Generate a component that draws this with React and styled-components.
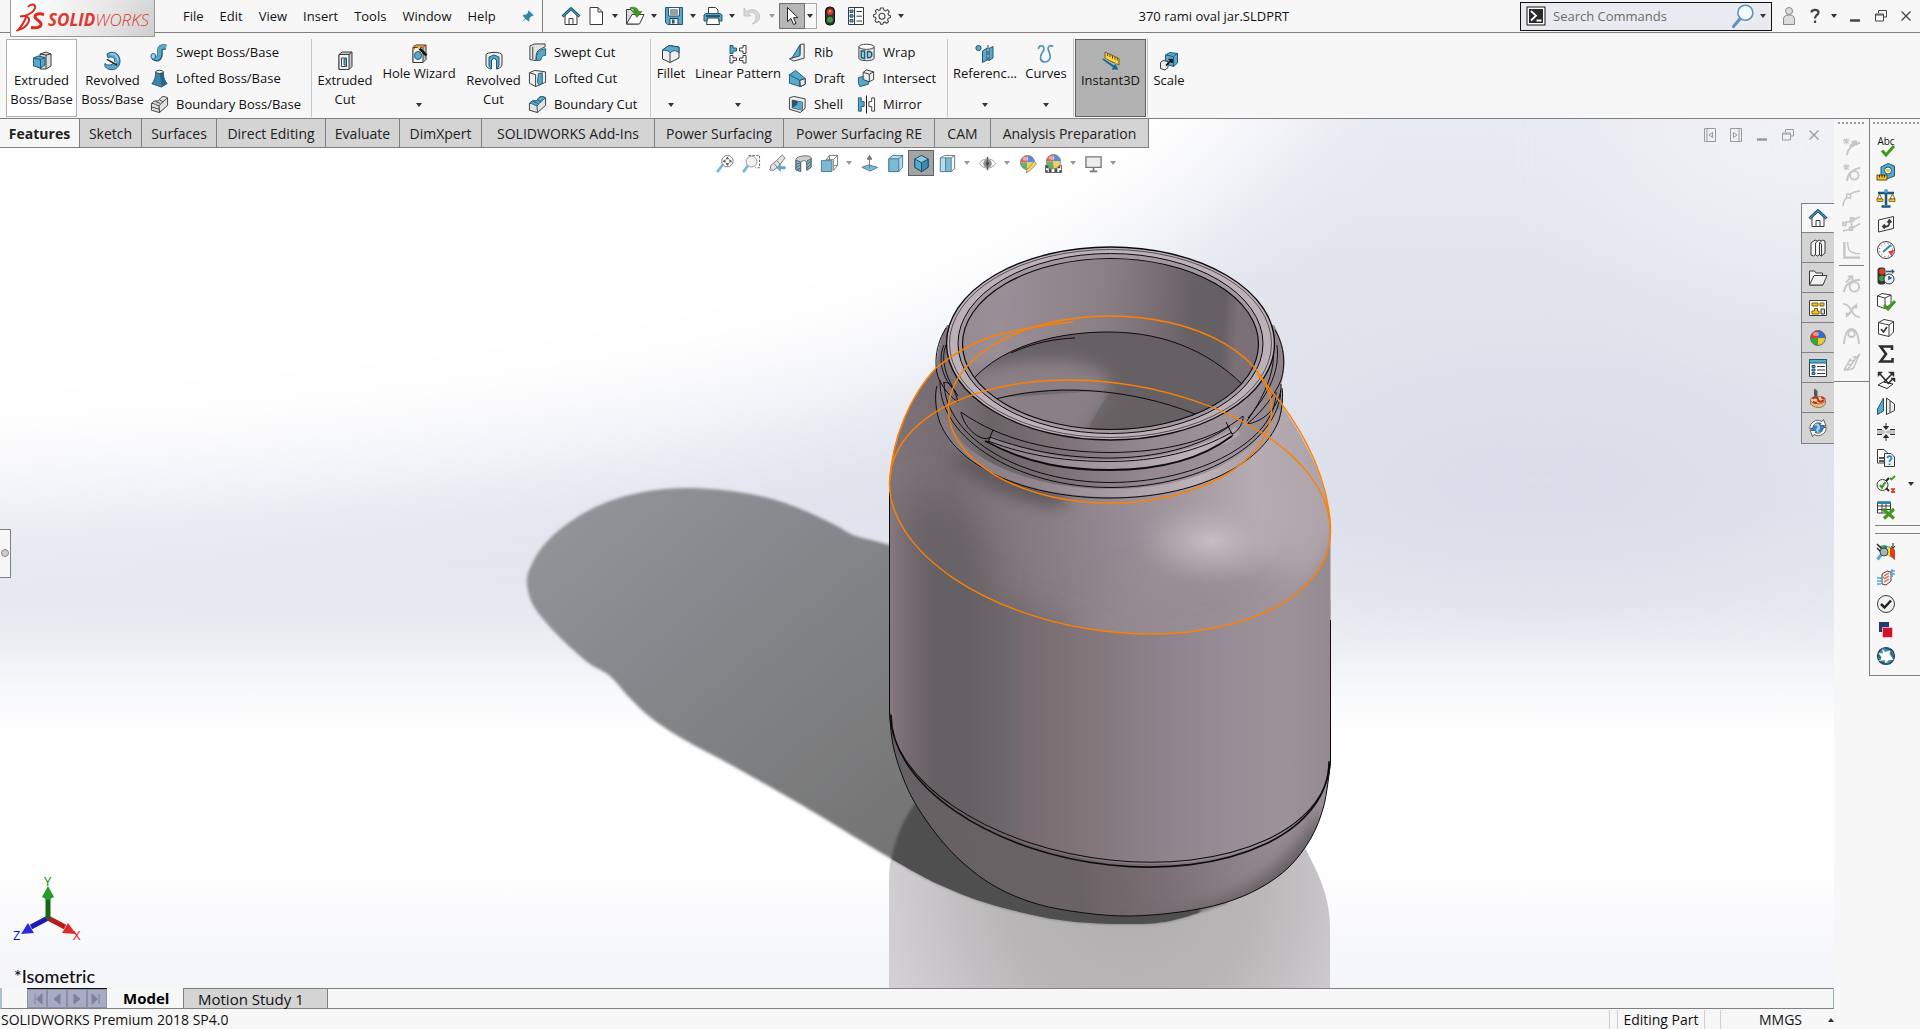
import React from "react";
import styled, { createGlobalStyle, css } from "styled-components";

const sans = `"Open Sans", "Noto Sans", sans-serif`;
const line = "#808080";
const face = "#f7f7f7";
const B = "#5aa9cb";
const L = "#a5d3e6";
const D = "#1d5a7a";
const K = "#3a3a3a";
const W = "#f4f4f4";
const G = "#c4c4c4";

const GlobalStyle = createGlobalStyle`
  * { box-sizing: border-box; }
  html, body, #root { height: 100%; }
  body { margin: 0; overflow: hidden; font-family: ${sans}; font-size: 13px; color: #111; background: ${face}; }
  button { font: inherit; color: inherit; background: none; border: 0; padding: 0; margin: 0; }
  svg { display: block; flex: none; }
`;

/* ---------- icons (20 x 20 grid) ---------- */
const house = (
  <g strokeLinejoin="round">
    <path d="M4 9V18.5H16V9L10 4Z" fill="#fff" stroke={K} />
    <path d="M8 18.5V12.5H12V18.5" fill="none" stroke={K} />
    <path d="M1.5 10.5L10 2.5L18.5 10.5" fill="none" stroke={D} strokeWidth="3" />
    <path d="M2 10L10 2.8L18 10" fill="none" stroke={B} strokeWidth="1" />
  </g>
);
const cube = (f1, f2, f3, s) => (
  <g stroke={s} strokeLinejoin="round">
    <path d="M10 1.5L17 5.2V14L10 18.5L3 14V5.2Z" fill={f1} />
    <path d="M3 5.2L10 9.2V18.5L3 14Z" fill={f2} />
    <path d="M17 5.2L10 9.2V18.5L17 14Z" fill={f3} />
  </g>
);
const beach = (
  <g>
    <path d="M10 9V1.5A7.5 7.5 0 0 0 2.5 9Z" fill="#e2392f" />
    <path d="M10 9V1.5A7.5 7.5 0 0 1 17.5 9Z" fill="#2f6fd0" />
    <path d="M10 9V16.5A7.5 7.5 0 0 1 2.5 9Z" fill="#3aa53a" />
    <path d="M10 9V16.5A7.5 7.5 0 0 0 17.5 9Z" fill="#f2c832" />
    <circle cx="10" cy="9" r="7.5" fill="none" stroke="#555" strokeWidth=".8" />
    <ellipse cx="8" cy="5" rx="3" ry="2" fill="#fff" opacity=".45" />
  </g>
);
const slab = (
  <g stroke={K} strokeLinejoin="round">
    <path d="M4 3.5L7 1H17V15.5L14 18.5H4Z" fill={G} />
    <path d="M4 3.5H14V18.5H4Z" fill={W} />
    <path d="M14 3.5L17 1" />
  </g>
);
const pale = "#c6c6c6";

const glyphs = {
  home: house,
  doc: <path d="M4 1.5H12L16.5 6V18.5H4Z M12 1.5V6H16.5" fill="#fff" stroke={K} strokeLinejoin="round" />,
  open: (
    <g strokeLinejoin="round">
      <path d="M1.5 18V3.5H6L7 5H13V18Z" fill="#ddd" stroke={K} />
      <path d="M1.5 18L7 8.5H19L14.5 18Z" fill="#fff" stroke={K} />
      <path d="M5 1.500C10 .5 13 2 13.500 5.500H17L12 11.500L7.500 5.500H10C9.500 3.500 8 2.500 5 2.500Z" fill="#3f9a1c" stroke="#2b7010" strokeWidth=".5" />
    </g>
  ),
  save: (
    <g>
      <path d="M1.500 1.500H18.500V18.500H3.500L1.500 16.500Z" fill={B} stroke={D} />
      <path d="M4.500 1.500H15.500V10H4.500Z" fill="#fff" stroke={D} />
      <path d="M6 4H14M6 6H14M6 8H14" stroke={K} />
      <path d="M6 12.500H14V18.500H6Z" fill="#eee" stroke={K} />
      <path d="M8 13.500H10.500V17.500H8Z" fill={D} />
    </g>
  ),
  print: (
    <g strokeLinejoin="round">
      <path d="M5.500 8V1.500H12.500L15 4V8" fill="#fff" stroke={K} />
      <path d="M1 9L3 7.500H17L19 9V15H1Z" fill={B} stroke={D} />
      <path d="M4.500 12H15.500L16.500 18.500H3.500Z" fill="#fff" stroke={K} />
      <path d="M3 10H17" stroke={D} strokeWidth="2" />
    </g>
  ),
  undo: <path d="M2 2V10H9L6.500 7.500C10 5 14 7 14 11C14 14 12.500 16 10 18C15 17 18 14 17.500 10C17 4.500 10 1.500 4.500 5.500Z" fill="#d8d8d8" stroke="#bdbdbd" strokeWidth=".8" />,
  cursor: <path d="M5.500 1.500V15.500L9 12.500L11.500 18.500L14 17.500L11.500 11.700H16Z" fill="#fff" stroke="#222" />,
  traffic: (
    <g>
      <rect x="5.500" y="1" width="9" height="18" rx="4" fill="#333" stroke="#111" />
      <circle cx="10" cy="6" r="3" fill="#e23a25" />
      <circle cx="10" cy="13.700" r="3" fill="#3f9a3c" />
      <circle cx="10" cy="5.300" r="1" fill="#ffa090" />
    </g>
  ),
  list: (
    <g>
      <path d="M2.500 1.500H17.500V18.500H2.500Z M8.500 1.500V18.500" fill="#fff" stroke={K} />
      <path d="M4 4H7V6.500H4ZM4 8.700H7V11.200H4ZM4 13.500H7V16H4Z" fill={B} stroke={D} />
      <path d="M10.500 5.500H16M10.500 10.200H16M10.500 15H16" stroke={K} />
    </g>
  ),
  gear: (
    <g fill="none" stroke="#444" strokeWidth="1.100" strokeLinejoin="round">
      <path d="M8.500 2H11.500L12 4.200L13.700 4.900L15.600 3.700L17.300 5.800L16 7.700L16.500 9L18.500 9.800V11.500L16.300 12.200L15.600 13.700L16.500 15.700L14.500 17.200L12.700 15.900L11.500 16.300L10.800 18.300H8.700L8.100 16.200L6.500 15.500L4.500 16.500L3 14.600L4.100 12.800L3.600 11.400L1.500 10.700V8.800L3.700 8.100L4.300 6.600L3.300 4.700L5 3.300L6.800 4.400L8 4Z" />
      <circle cx="10" cy="10.200" r="3" />
    </g>
  ),
  pin: <path d="M11 2L18 9L16.500 10.500L15.300 10L12 13.300L12 16.500L10.500 18L6.800 14.200L1.500 18.700L1.500 18.300L6 13.300L2.300 9.700L3.800 8.200H7L10.300 5L9.700 3.500Z" fill="#2f86b3" />,
  terminal: (
    <g>
      <rect x="1" y="1" width="18" height="18" fill="#fff" stroke="#111" />
      <rect x="3" y="3" width="14" height="14" fill="#2a2a2a" />
      <path d="M5 5L10 9.700L5 14.500M10.500 14.500H15.500" fill="none" stroke="#fff" strokeWidth="1.800" />
    </g>
  ),
  lens: (
    <g>
      <path d="M7.500 11.500L2 18" stroke="#5f93b8" strokeWidth="2.500" strokeLinecap="round" />
      <circle cx="11.500" cy="7" r="6" fill="#f4fbff" stroke="#5f93b8" strokeWidth="1.300" />
    </g>
  ),
  person: (
    <g fill="#dcdcdc" stroke="#8a8a8a">
      <circle cx="10" cy="5" r="3.500" />
      <path d="M4.500 18.500V13C4.500 10 7 9 10 9C13 9 15.500 10 15.500 13V18.500Z" />
    </g>
  ),
  help: <path d="M6.500 6.500C6.500 3 13.500 3 13.500 6.500C13.500 9 10 9 10 12.500M10 14.500V17" fill="none" stroke="#444" strokeWidth="2.200" />,
  min: <path d="M5 14.500H15" stroke="currentColor" strokeWidth="2.500" />,
  restore: <path d="M7.500 7V4.500H15.500V11H12.500M4.500 8H12.500V15H4.500Z M4.500 9H12.500" fill="none" stroke="currentColor" />,
  close: <path d="M5.500 5.500L14.500 14.500M14.500 5.500L5.500 14.500" stroke="currentColor" strokeWidth="1.300" />,
  winLeft: <path d="M4.500 3.500H15.500V16.500H4.500Z M7 4V16 M12.500 7.500V12.500L9 10Z" fill="none" stroke="currentColor" />,
  winRight: <path d="M4.500 3.500H15.500V16.500H4.500Z M13 4V16 M7.500 7.500V12.500L11 10Z" fill="none" stroke="currentColor" />,

  extrude: (
    <g strokeLinejoin="round">
      <path d="M8 3L14 1L19 3V15L14 18H8Z" fill="#ddd" stroke={K} />
      <path d="M14 4V18M14 4L19 3M14 4L8 3" stroke={K} fill="none" />
      <path d="M1.500 7L6 5L13 6.500V14L8.500 17L1.500 15Z" fill={B} stroke={D} />
      <path d="M1.500 7L8.500 8.500V17M8.500 8.500L13 6.500" stroke={D} fill="none" />
    </g>
  ),
  revolve: (
    <g>
      <path d="M4 3C9-1 17 2 17 10C17 16 12 19.500 7 18.500C3 18 1 15 2 12.500C5 15.500 11 14 11.500 10C12 6 8 5 5 7Z" fill={B} stroke={D} />
      <path d="M7 3C11 2 15 5 15 10" fill="none" stroke={L} strokeWidth="1.500" />
      <path d="M4 8L14 14" stroke="#222" strokeWidth="2" />
      <path d="M4 7L13 12" stroke="#fff" />
    </g>
  ),
  sweep: (
    <g>
      <path d="M3.500 15C9 19 11 14 10.500 10C10 5 12 3.500 17 4.500" fill="none" stroke={D} strokeWidth="6" />
      <path d="M3.500 14.500C9 18.500 10.500 14 10 10C9.500 5 12 3 17 4" fill="none" stroke={B} strokeWidth="4" />
      <ellipse cx="3.500" cy="14" rx="2.500" ry="3" fill={L} stroke={D} />
    </g>
  ),
  loft: (
    <g strokeLinejoin="round">
      <path d="M6 3H14C14 8 15 12 18 15.500L12 19L2 15.500C5 12 6 8 6 3Z" fill="#3f85a8" stroke={D} />
      <path d="M10 4L12 18L18 15.500C15 12 14 8 14 3Z" fill="#2a6384" />
      <ellipse cx="10" cy="3" rx="4" ry="1.700" fill="#eee" stroke={K} />
    </g>
  ),
  boundary: (
    <g strokeLinejoin="round" stroke={K}>
      <path d="M1.500 9C5 4 8 8 10 5C12 1 15 1 18.500 3V11L10 18.500L1.500 16Z" fill="#e2e2e2" />
      <path d="M1.500 9C4 8 7 11 9.500 11.500C12 8 15 6 18.500 3M9.500 11.500L10 18.500M6 7L11 9M10 5L14 7.500M1.500 12.500L10 15" fill="none" />
    </g>
  ),
  boundaryCut: (
    <g strokeLinejoin="round" stroke={K}>
      <path d="M1.500 9C5 4 8 8 10 5C12 1 15 1 18.500 3V11L10 18.500L1.500 16Z" fill="#e2e2e2" />
      <path d="M1.500 9C5 4 8 8 10 5C12 1 15 1 18.500 3C15 6 12 8 9.500 11.500C7 11 4 8 1.500 9Z" fill={B} stroke={D} />
      <path d="M6 7L11 9M10 5L14 7.500M9.500 11.500L10 18.500" stroke={D} fill="none" />
    </g>
  ),
  extrudeCut: (
    <g>
      {slab}
      <path d="M6.500 7H11.500V15.500H6.500Z" fill="#fff" stroke={K} />
      <path d="M9 8H11.500V14H9Z" fill={B} stroke={D} />
    </g>
  ),
  hole: (
    <g>
      {slab}
      <ellipse cx="9" cy="11.500" rx="3.500" ry="4" fill={B} stroke={D} />
      <path d="M10.500 4.500L17.500 11.500" stroke="#111" strokeWidth="2.500" />
      <path d="M5 1L6 3M8 .5L9 3M13 .5L11.500 3M3 5L6 4.500M16 2L13 4" stroke="#e0711c" strokeWidth="1.500" />
      <circle cx="10" cy="3.500" r="1.500" fill="#f5c518" />
    </g>
  ),
  revolveCut: (
    <g strokeLinejoin="round">
      <path d="M2 4C2 .5 18 .5 18 4V14C18 16 14 18 12.500 18V9L10 6L7.500 9V18C5 18 2 16 2 14Z" fill="#eee" stroke={K} />
      <path d="M5 6L10 4L15 6V15L12.500 18V9L10 7L7.500 9V18L5 15Z" fill={B} stroke={D} />
    </g>
  ),
  sweepCut: (
    <g strokeLinejoin="round">
      <path d="M2 3L7 1H18V4L14 6C10 7 8 11 8.500 18.500L2 17.500Z" fill="#e4e4e4" stroke={K} />
      <path d="M9 18.500C8 11 11 7 18.500 6V13C15 13 13.500 15 13.500 18Z" fill={B} stroke={D} />
      <path d="M5 4V17" stroke={K} />
    </g>
  ),
  loftCut: (
    <g strokeLinejoin="round">
      <path d="M1.500 4L7 1.500L18.500 3V14L8 18.500L1.500 15Z" fill="#eee" stroke={K} />
      <path d="M1.500 4L8 6V18.500" fill="none" stroke={K} />
      <path d="M11 5L15 4V15L12 17L10 14Z" fill={B} stroke={D} />
    </g>
  ),
  fillet: (
    <g strokeLinejoin="round">
      <path d="M1.500 6L8 1.500L18 3V14L9 18.500L1.500 15Z" fill="#eee" stroke={K} />
      <path d="M8 1.500L18 3V9C15 6 12 6 9 9C9 7 6 6.500 1.500 6Z" fill={B} stroke={D} />
      <path d="M9 9V18.500" stroke={K} />
    </g>
  ),
  pattern: (
    <g stroke={K} fill="#fff">
      <path d="M2 1.500H5V4H8.500V7H5V9.500H2Z" fill={B} stroke={D} />
      <path d="M18 1.500H15V4H11.500V7H15V9.500H18Z" />
      <path d="M2 11.500H5V14H8.500V16.500H5V19H2Z" />
      <path d="M18 11.500H15V14H11.500V16.500H15V19H18Z" />
    </g>
  ),
  rib: (
    <g strokeLinejoin="round">
      <path d="M13 1.500L17 1V16L6 19L1.500 16.500L12.500 13Z" fill="#eee" stroke={K} />
      <path d="M12.500 2V13.500L4 16Z" fill={B} stroke={D} />
    </g>
  ),
  draft: (
    <g strokeLinejoin="round">
      <path d="M1.500 6L8 1.500L18 10V16L13 18.500L1.500 15Z" fill={B} stroke={D} />
      <path d="M1.500 6L12.500 12V18.500L18 16V10L12.500 12" fill="#3e86a8" stroke={D} />
      <path d="M12.500 12L18 10V16L13 18.500Z" fill="#eee" stroke={K} />
    </g>
  ),
  shell: (
    <g strokeLinejoin="round">
      <path d="M1.500 3L6 1.500L18 4V14L13 18.500L1.500 15Z" fill="#eee" stroke={K} />
      <path d="M4.500 5.500L15 7.500V16L4.500 13.500Z" fill={D} stroke={K} />
      <path d="M4.500 13.500L10 10V6.500L15 7.500V16Z" fill={B} />
    </g>
  ),
  wrap: (
    <g>
      <path d="M2 4V16C2 19.500 18 19.500 18 16V4" fill="#eee" stroke={K} />
      <ellipse cx="10" cy="4" rx="8" ry="2.700" fill="#fff" stroke={K} />
      <path d="M4.500 8.500H8V16.500L4.500 15.500ZM11 9H13.500L15.500 10.500V13.500L13.500 15.500H11Z" fill={L} stroke={D} strokeWidth="1.600" />
    </g>
  ),
  intersect: (
    <g strokeLinejoin="round">
      <path d="M1.500 9L6 8L12 11V16L3 18.500L1.500 15Z" fill={B} stroke={D} />
      <path d="M6.500 3.500L10 1L17.500 3V11L13 13.500L6.500 11Z" fill="#eee" stroke={K} />
      <path d="M6.500 3.500L13 5.500V13.500M13 5.500L17.500 3" fill="none" stroke={K} />
    </g>
  ),
  mirror: (
    <g>
      <path d="M1.500 3H4.500V7H7.500V12H4.500V17H1.500Z" fill={B} stroke={D} />
      <path d="M18.500 3H15.500V7H12.500V12H15.500V17H18.500Z" fill="#fff" stroke={K} />
      <path d="M10 .5V19.500" stroke="#111" />
    </g>
  ),
  reference: (
    <g>
      <circle cx="3.500" cy="4" r="2.600" fill={B} stroke={D} />
      <path d="M7.500 7L12 4V16L7.500 18.500Z M14 4.500L18 2.500V14L14 16.500Z" fill={B} stroke={D} />
      <path d="M13 1V19.500" stroke={K} strokeDasharray="4 2" />
    </g>
  ),
  curves: <path d="M2.500 5C2.500 1 8 .5 8 4.500C8 8 3.500 10 4.500 14.500C5.500 19 11 19 13.500 15.500C16 11.500 12 7 12 4.500C12 1.500 15 1 17 2.500" fill="none" stroke="#4a90b8" strokeWidth="1.600" />,
  instant: (
    <g>
      <path d="M4 1L18 7.500V14L4 7.500Z" fill="#fbd33c" stroke="#5a4a10" strokeWidth=".8" />
      <path d="M6.500 2.500V5M9 3.500V6M11.500 4.700V7.500M14 6V8.500M16.300 7V9.500" stroke="#222" strokeWidth=".8" />
      <path d="M.5 8.500L2.500 7.300L13 14L14.500 12L18 19H10L11.500 16.500Z" fill="#2a6384" stroke={L} strokeWidth=".6" />
    </g>
  ),
  scale: (
    <g strokeLinejoin="round">
      <path d="M6.500 4L11 1.500L18.500 2.500V12L14.500 15.500L6.500 13Z" fill={B} stroke={D} />
      <path d="M6.500 4L14.500 5.500V15.500M14.500 5.500L18.500 2.500" fill="none" stroke={D} />
      <path d="M1.500 11.500L4 9.500L9 10.500V16.500L6 19L1.500 17.500Z" fill="#eee" stroke={K} />
      <path d="M7 14.500L12.500 9M9.500 8.500H13V12" fill="none" stroke="#111" strokeWidth="1.700" />
    </g>
  ),

  zoomFit: (
    <g>
      <path d="M7 11.500L2 18" stroke={B} strokeWidth="3" strokeLinecap="round" />
      <circle cx="12" cy="7.500" r="6" fill="#fff" stroke="#555" />
      <path d="M12 2.500L14 5.500H10ZM12 12.500L14 9.500H10ZM7 7.500L10 5.500V9.500ZM17 7.500L14 5.500V9.500Z" fill="#333" />
    </g>
  ),
  zoomArea: (
    <g>
      <path d="M7 1.500H18.500V14.500H14" fill="none" stroke="#333" strokeDasharray="2.500 1.500" />
      <path d="M6 12.500L2 18" stroke={B} strokeWidth="3" strokeLinecap="round" />
      <circle cx="10" cy="8" r="5.700" fill="#eee" stroke="#777" />
    </g>
  ),
  previous: (
    <g>
      <path d="M15 1L18 4L11 13L6 17L2 17L3 12L9 7Z" fill="#ddd" stroke="#555" />
      <path d="M6 10L10 14M9 7L13 11" stroke="#555" />
      <path d="M18.500 13H13.500V10L8.500 14.500L13.500 19V16H18.500Z" fill="#3e8fb8" />
    </g>
  ),
  section: (
    <g strokeLinejoin="round">
      <path d="M2 6C2 1.500 18 .5 18 4V14L13.500 17V8C12 6.500 8 7 7 8.500V18.500L2 16.500Z" fill={G} stroke="#444" />
      <path d="M2 6.500L7 8.500V18.500L2 16.500ZM13.500 7.500L18 5V14L13.500 17Z" fill={B} stroke="#333" />
      <path d="M2.500 11L6 9.500M2.500 14L6.500 12M3 16.500L6.500 15M14 11L17.500 7.500M14 14.500L17.500 11" stroke="#333" />
    </g>
  ),
  orient: (
    <g strokeLinejoin="round">
      <path d="M6.500 6L10 1.500H18.500V12L14 17.500M10 1.500V6M14 6L18.500 1.500M14 6H6M14 6V17M14 12H18.500" fill="none" stroke="#555" />
      <path d="M1.500 7H12.500V18.500H1.500Z" fill={B} stroke={D} />
    </g>
  ),
  normal: (
    <g>
      <path d="M2 14L9 11.500L18.500 14L11 18Z" fill={B} stroke={D} />
      <path d="M10 15V3M7.500 5.500L10 1.500L12.500 5.500Z" fill="#555" stroke="#555" />
    </g>
  ),
  viewCube: (
    <g strokeLinejoin="round">
      <path d="M3 5L7 1.500H17.500V14L13.500 18.500H3Z" fill={L} stroke={D} />
      <path d="M3 5H13.500V18.500H3Z" fill={B} stroke={D} />
      <path d="M13.500 5L17.500 1.500" stroke={D} />
    </g>
  ),
  isoCube: cube("#8cc9e2", B, "#3d8db2", "#174d69"),
  display: (
    <g strokeLinejoin="round">
      <path d="M2.500 4L7 1.500H17.500V15.500L14 18.500H2.500Z" fill="#f4f4f4" stroke="#555" />
      <path d="M2.500 4H8V18.500H2.500Z" fill={L} stroke={D} strokeWidth=".8" />
      <path d="M8 4H14V18.500H8Z" fill={B} stroke={D} strokeWidth=".8" />
      <path d="M14 4L17.500 1.500" stroke="#555" />
    </g>
  ),
  eye: (
    <g>
      <path d="M1.500 10C5 3.500 15 3.500 18.500 10C15 16.500 5 16.500 1.500 10Z" fill="#fff" stroke="#888" />
      <circle cx="10" cy="10" r="4.500" fill="#777" />
      <path d="M10 3V17" stroke="#333" strokeWidth="1.500" />
      <circle cx="10" cy="10" r="1.800" fill="#222" />
    </g>
  ),
  appearance: (
    <g>
      {beach}
      <path d="M17.500 8L9.500 16.500L8.500 19.500L11.500 18.500L19.500 10.500Z" fill="#f5d15a" stroke="#6a5420" strokeWidth=".8" />
    </g>
  ),
  sceneBall: (
    <g>
      <path d="M1.500 12H18.500V19.500H1.500Z" fill="#fff" stroke="#333" />
      <path d="M2 12H5V15H2ZM8 15H11V12H8ZM14 12H17V15H14ZM5 15H8V19H5ZM11 15H14V19H11ZM2 17H4V19H2ZM16 17H18V19H16Z" fill="#222" />
      <g transform="translate(0 -1)">{beach}</g>
    </g>
  ),
  monitor: (
    <g>
      <path d="M2 3H18V14H2Z" fill="#e8e8e8" stroke="#555" strokeWidth="1.400" />
      <path d="M10 14V18M6 18.300H14" stroke="#555" strokeWidth="1.800" />
    </g>
  ),

  books: (
    <g fill="#f2f2f2" stroke={K} strokeLinejoin="round">
      <path d="M3 5L7 2L9.500 3V15L5.500 18L3 17Z" />
      <path d="M7.500 5L11 2L13.500 3V15L9.500 18L7.500 17Z" />
      <path d="M11.500 5L14.500 2L17 3V15L13.500 18L11.500 17Z M11.500 5L13.500 6V18" />
    </g>
  ),
  folder: (
    <g fill="#f2f2f2" stroke={K} strokeLinejoin="round">
      <path d="M1.500 17V3H6.500L8 5H14.500V17Z" />
      <path d="M1.500 17L6 7.500H19L15 17Z" />
    </g>
  ),
  palette: (
    <g>
      <path d="M1.500 2.500H18.500V17.500H1.500Z" fill="#fff" stroke={K} />
      <path d="M4 5H10V8H4ZM12 5H16V8H12ZM4 16V13H6.500V10.500H9.500V13H11V16Z" fill="#f6c522" stroke="#7a5f10" />
      <path d="M13 11H16.500V16H13Z" fill="#ddd" stroke={K} />
    </g>
  ),
  ball: <g transform="translate(0 1)">{beach}</g>,
  props: (
    <g>
      <path d="M1.500 1.500H18.500V18.500H1.500Z" fill="#fff" stroke={K} />
      <path d="M1.500 1.500H18.500V5H1.500Z" fill={B} stroke={D} />
      <path d="M4 7.500H7V9.500H4ZM4 11H7V13H4ZM4 14.500H7V16.500H4Z" fill={B} stroke={D} />
      <path d="M9 8.500H17M9 12H17M9 15.500H17" stroke={K} />
    </g>
  ),
  stamp: (
    <g>
      <path d="M2.500 12L10 15L17.500 12V16C15 19 12 20 10 19.500C7 19.500 4 18 2.500 16Z" fill="#e0c080" stroke="#8a6a3a" strokeWidth=".8" />
      <ellipse cx="10" cy="12" rx="7.500" ry="3.800" fill="#ecd6a6" stroke="#8a6a3a" strokeWidth=".8" />
      <path d="M4.500 11C6 8.500 10 9 10 11.500C10 14 14.500 14.500 15.500 12M13 9.500C15 9.500 16 10.500 16 11.500M5 13.500C6 14.500 8 15 9 14.500" fill="none" stroke="#c82f22" strokeWidth="2.200" />
      <path d="M6.500 .5L9.500 3V7L8 11L6 7V3Z" fill="#555" />
    </g>
  ),
  sync: (
    <g>
      <circle cx="10" cy="10" r="7" fill="#2f86d8" />
      <path d="M6 7C9 4 13 9 9 12C8 15 12 15 13 16" fill="none" stroke="#9fd0f5" strokeWidth="2.500" />
      <path d="M2 11C1 5 8 0 14 3.500L15.500 1.500L18 8L11.500 7L13 5.500C9 3.500 5 6 5 10Z" fill="#fff" stroke={K} strokeWidth=".8" />
      <path d="M18 9C19 15 12 20 6 16.500L4.500 18.500L2 12L8.500 13L7 14.500C11 16.500 15 14 15 10Z" fill="#fff" stroke={K} strokeWidth=".8" />
    </g>
  ),

  skTangent: (
    <g fill="none" stroke={pale} strokeWidth="2">
      <path d="M5 19C6 12 10 8 19 6M8 10L15 4M10 5H15V9" />
      <path d="M1 4H8M4.500 1V8M2 2L7 7M7 2L2 7" strokeWidth="1.200" />
    </g>
  ),
  skCircle: (
    <g fill="none" stroke={pale} strokeWidth="2">
      <path d="M5 19C6 11 10 7 19 5" />
      <path d="M1 4H8M4.500 1V8M2 2L7 7M7 2L2 7" strokeWidth="1.200" />
      <circle cx="13" cy="13" r="4.500" />
    </g>
  ),
  skArc: (
    <g fill="none" stroke={pale} strokeWidth="1.600">
      <path d="M1 18C2 9 9 3 19 2" />
      <path d="M5 5.500H9V9.500H5Z" fill={face} />
    </g>
  ),
  skSpline: (
    <g fill="none" stroke={pale} strokeWidth="1.800">
      <path d="M1 9C5 7 8 8 10 6C13 4 15 4 19 2M1 17C5 15 8 16 10 14C13 12 15 12 19 9M10 7V13" />
      <path d="M1 8H4V11H1ZM9 3H12V6H9ZM8 13H11V16H8Z" fill={face} />
    </g>
  ),
  skCorner: (
    <g fill="none" stroke={pale}>
      <path d="M2.500 1V17.500H19" strokeWidth="2.500" />
      <path d="M6 1C6 10 8 13 19 13.500" strokeWidth="1.500" />
    </g>
  ),
  skTan2: (
    <g fill="none" stroke={pale} strokeWidth="2">
      <path d="M2 18C3 10 8 6 19 5M4 8L11 1M6 1.500H11V6" />
      <circle cx="13" cy="12.500" r="5" />
    </g>
  ),
  skInflect: (
    <g stroke={pale} fill="none" strokeWidth="2">
      <path d="M1 3C6 3 8 6 10 10C12 15 15 17 19 17M14 5L6 15" />
      <path d="M10 7L16 2V8ZM10 13L4 18V12Z" fill={pale} stroke="none" />
    </g>
  ),
  skPeak: (
    <g fill="none" stroke={pale} strokeWidth="2">
      <path d="M2 18C3 8 6 2 10 2C14 2 17 8 18 18" />
      <circle cx="10" cy="7" r="3.500" />
    </g>
  ),
  skFit: (
    <g fill="none" stroke={pale} strokeWidth="1.600">
      <path d="M2 18C10 17 10 8 18 2L12 16C9 18 6 18 2 18ZM5 12H10M7 8H14M11 4H17M2 18L9 6" />
    </g>
  ),

  tick: <path d="M6 12.500L10 17L18 8" fill="none" stroke="#3f9a1c" strokeWidth="3" />,
  tape: (
    <g>
      <path d="M5 5L12 1.500L18.500 4V14L12 16.500L5 13Z" fill={B} stroke={D} />
      <circle cx="12" cy="8.500" r="3.500" fill="#e9f3f8" stroke={D} />
      <circle cx="12" cy="8.500" r="1.800" fill="#f6c522" />
      <path d="M1 13H11V18H1Z" fill="#f6c522" stroke="#5a4a10" />
      <path d="M3.500 13V15.500M6 13V15.500M8.500 13V15.500" stroke="#222" />
    </g>
  ),
  balance: (
    <g>
      <path d="M10 2V17M2 5H18M5.500 18.500H14.500" stroke={D} strokeWidth="2.500" />
      <path d="M1 11L3.500 6L6 11ZM14 11L16.500 6L19 11Z" fill="#fff" stroke="#7a5f10" />
      <path d="M1 11H7V13.500H1ZM13 11H19V13.500H13Z" fill="#f6c522" stroke="#7a5f10" strokeWidth=".8" />
      <circle cx="10" cy="3" r="2" fill={B} />
    </g>
  ),
  sheetArrow: (
    <g fill="none" stroke={K}>
      <path d="M2.500 6L17.500 2.500V14.500L2.500 18Z" />
      <path d="M7 12.500H10.500C13 12.500 13.500 10 13.500 7M11.500 8.500L13.500 6L15.500 8.500M9 10.500L7 12.500L9 14.500" strokeWidth="1.800" />
    </g>
  ),
  gauge: (
    <g>
      <circle cx="10" cy="10" r="8.500" fill="#fff" stroke={K} />
      <circle cx="10" cy="10" r="6.500" fill="none" stroke={K} strokeDasharray="1 2.500" />
      <path d="M12 11.500L18 10L15.500 16Z" fill="#e2392f" />
      <path d="M7 12L15 5" stroke="#2f86b3" strokeWidth="2" />
    </g>
  ),
  perf: (
    <g>
      <rect x="1.500" y="1.500" width="8" height="17" rx="3" fill="#333" />
      <circle cx="6" cy="5.500" r="3" fill="#e23a25" />
      <circle cx="6" cy="12.500" r="3" fill="#3f9a3c" />
      <circle cx="13" cy="13" r="5" fill="#e7f2fa" stroke={K} />
      <path d="M13 10V13L15.500 11.500M10 5.500H18.500M16.500 3.500V7.500" fill="none" stroke={D} strokeWidth="1.500" />
    </g>
  ),
  boxTick: (
    <g>
      <path d="M1.500 4L6 1.500L15 3V12L9 16.500L1.500 14Z M1.500 4L9 6V16.500M9 6L15 3" fill="#fff" stroke={K} />
      <path d="M8 13L12 17L19 9" fill="none" stroke="#3f9a1c" strokeWidth="3" />
    </g>
  ),
  boxCheck: (
    <g strokeLinejoin="round">
      <path d="M2.500 4.500L8 1.500L17.500 3.500V14L13 18.500L2.500 16Z" fill="#fff" stroke={K} />
      <path d="M2.500 4.500L13 7V18.500M13 7L17.500 3.500" fill="none" stroke={K} />
      <path d="M5 11L7.500 14L11 9" fill="none" stroke={K} strokeWidth="1.800" />
    </g>
  ),
  sigma: <path d="M16 6V2.500H4.500L10 10L4.500 17.500H16.500V14" fill="none" stroke="#2d2d2d" strokeWidth="2.600" />,
  deviate: (
    <g fill="none" stroke="#2d2d2d">
      <path d="M2 15L7 12L17 14L11 18.500Z" />
      <path d="M4 4L12 13M16 4L8 12M16.500 9L12 14" strokeWidth="1.600" />
      <path d="M2 2H6.500L2 6.500ZM12.500 2H18V6.500ZM15 8H19V12Z" fill="#2d2d2d" strokeWidth=".5" />
    </g>
  ),
  symmetry: (
    <g strokeLinejoin="round">
      <path d="M7.500 2V15L1.500 18.500V13Z" fill={B} stroke={D} />
      <path d="M10.500 2V18.500L18.500 14.500V8Z M14 5V16" fill="#eee" stroke={K} />
    </g>
  ),
  thick: (
    <g stroke="#2d2d2d">
      <path d="M1 7.500H6L10 9.500L14 7.500H19V12.500H14L10 10.500L6 12.500H1Z" fill="#c4c4c4" stroke="none" />
      <path d="M1 7.500H6M14 7.500H19M1 12.500H6M14 12.500H19M10 1V5M10 15V19" />
      <path d="M7.500 4.500L10 7.500L12.500 4.500ZM7.500 15.500L10 12.500L12.500 15.500Z" fill="#2d2d2d" />
    </g>
  ),
  compare: (
    <g>
      <path d="M1.500 1.500H8L11 4.500V15H1.500Z" fill="#fff" stroke={K} />
      <path d="M8.500 5.500H15L18.500 9V18.500H8.500Z" fill="#eef5fa" stroke={K} />
      <path d="M3 10H8M3 13H8" stroke="#222" strokeWidth="1.600" />
      <path d="M11.500 10C11.500 7.500 15.500 7.500 15.500 10C15.500 11.700 13.500 12 13.500 14M13.500 15.500V17" fill="none" stroke="#2f86b3" strokeWidth="1.800" />
    </g>
  ),
  checkGroup: (
    <g fill="none">
      <circle cx="6.500" cy="11" r="5.500" stroke={K} />
      <path d="M4 11L6 13.500L9.500 8" stroke="#3f9a1c" strokeWidth="2.200" />
      <path d="M10 7L13 4M10 14L13 17" stroke="#222" strokeWidth="1.800" />
      <path d="M14 4L15.500 5.500L19 2" stroke="#3f9a1c" strokeWidth="1.800" />
      <path d="M15 14.500L19 18.500M19 14.500L15 18.500M17 14V19" stroke="#d9401c" strokeWidth="1.400" />
    </g>
  ),
  excel: (
    <g>
      <path d="M1.500 2H14.500V13H1.500ZM1.500 6H14.500M1.500 9.500H14.500M6 4V13M10 4V13" fill="#fff" stroke={K} />
      <path d="M1.500 1.500H14.500V4H1.500Z" fill="#2f86b3" />
      <path d="M7 9L18 18.500M18 9L8 18.500" stroke="#3f9a1c" strokeWidth="3.200" />
    </g>
  ),
  simZoom: (
    <g>
      <path d="M3 4L9 3C14 5 16 5 19 8V18C15 14 12 14 9 13Z" fill="#4a4" />
      <path d="M8 4C11 5 12 5 14 6V14L8 13Z" fill="#f3ea2c" />
      <path d="M14 5.500C16 6 17 7 19 8.500V18L14 13.500Z" fill="#e8391f" />
      <path d="M8 3.500L11 4.500V12L8 12Z" fill="#2f6fd0" />
      <path d="M1 2L6 7M1 6L6 11" stroke="#2d2d2d" strokeWidth="1.500" />
      <path d="M5 13L1.500 17.500" stroke={B} strokeWidth="3" />
      <circle cx="8" cy="10" r="4" fill="#9fb4c4" stroke="#444" />
      <path d="M17 1V6M15 4L17 6.500L19 4" stroke="#222" fill="none" />
    </g>
  ),
  flow: (
    <g fill="none">
      <path d="M6 6L11 3L15 4V13L10 17L6 16Z" fill="#f3f3f3" stroke="#444" />
      <path d="M8 8L13 5M8 11L13 8M8 14L13 11" stroke="#e87a6a" strokeWidth="1.500" />
      <path d="M1 10H6M1 13H6M1 16H5M15 3H19M15 6H19M16 1V9" stroke="#4aa8d8" strokeWidth="1.400" />
      <path d="M5 11L8 9" stroke="#4ab84a" strokeWidth="1.500" />
    </g>
  ),
  circleCheck: (
    <g fill="none">
      <circle cx="10" cy="10" r="8.500" fill="#f2f2f2" stroke={K} />
      <path d="M5 10L8.500 13.500L15 6.500" stroke="#222" strokeWidth="2.500" />
    </g>
  ),
  squares: (
    <g>
      <path d="M3 2H13V12H3Z" fill="#26386e" />
      <path d="M6.500 7.500H16.500V17.500H6.500Z" fill="#d0122c" stroke="#f7c8ce" strokeWidth=".8" />
    </g>
  ),
  compass: (
    <g>
      <circle cx="10" cy="10" r="8.500" fill="#4a8bad" stroke="#1b3f55" strokeWidth="1.200" />
      <path d="M6 2.500L9 6L14 4.500L13.500 8L17.500 14L13 14L9.500 17.500L8.500 14L3 15L5.500 11L2.500 7L7 7.500Z" fill="#fff" />
      <path d="M2 9C4 11 5 12 4 14M9 2C11 3 13 3 15 4M18 11C16 9 15 8 15.500 6M11 18C9 17 7 17 5 16" stroke="#1b3f55" strokeWidth=".8" fill="none" />
    </g>
  ),
};

const Svg = styled.svg`
  width: ${(p) => p.$size}px;
  height: ${(p) => p.$size}px;
`;
const Icon = ({ name, size = 20 }) => (
  <Svg $size={size} viewBox="0 0 20 20" aria-hidden="true">{glyphs[name]}</Svg>
);

const Caret = styled.span`
  width: 0;
  height: 0;
  border: 3px solid transparent;
  border-bottom-width: 0;
  border-top: 4px solid ${(p) => p.$color || "#333"};
`;

/* ---------- title bar ---------- */
const Page = styled.div`
  display: flex;
  flex-direction: column;
  height: 100vh;
  background: ${face};
`;
const TitleBar = styled.header`
  display: flex;
  align-items: center;
  height: 33px;
  border-bottom: 1px solid ${line};
  padding: 0 1px 0 10px;
`;
const Logo = styled.div`
  position: relative;
  z-index: 2;
  align-self: flex-start;
  display: flex;
  align-items: center;
  gap: 2px;
  flex: none;
  width: 145px;
  height: 37px;
  padding: 0 0 0 5px;
  border: 1px solid #999;
  border-top: 0;
  background: linear-gradient(120deg, #fff 10%, #e8e8e8 60%, #cfcfcf);
`;
const LogoText = styled.span`
  padding-top: 4px;
  font: italic 300 17px/20px "Open Sans", sans-serif;
  color: #dc3a2f;
  b { font-weight: 700; }
`;
const Menu = styled.nav`
  display: flex;
  padding-left: 20px;
`;
const MenuItem = styled.button`
  padding: 0 8px;
  font-size: 13px;
  line-height: 18px;
`;
const PinButton = styled.button`
  margin-left: 17px;
`;
const QuickTools = styled.div`
  display: flex;
  align-items: center;
  height: 32px;
  margin-left: 7px;
  padding-left: 16px;
  border-left: 1px solid ${line};
`;
const QuickButton = styled.button`
  display: flex;
  align-items: center;
  justify-content: center;
  width: ${(p) => p.$w || 26}px;
  height: 26px;
  ${(p) => p.$on && css`background: #b6b6b6; outline: 1px solid #707070; outline-offset: -1px;`}
  ${(p) => p.$boxed && css`border: 1px solid #aaa; border-left: 0;`}
`;
const DocTitle = styled.div`
  flex: 1;
  text-align: center;
  line-height: 18px;
  white-space: nowrap;
`;
const Search = styled.form`
  display: flex;
  align-items: center;
  width: 252px;
  height: 29px;
  padding: 0 5px;
  border: 1px solid #111;
  background: #e9ebf0;
`;
const SearchInput = styled.input`
  flex: 1;
  min-width: 0;
  border: 0;
  outline: 0;
  padding: 0 0 0 7px;
  background: none;
  font: 13px ${sans};
  &::placeholder { color: #6b6b6b; opacity: 1; }
`;
const SearchButton = styled.button`
  display: flex;
  align-items: center;
  gap: 4px;
`;
const WindowTools = styled.div`
  display: flex;
  align-items: center;
  padding-left: 4px;
  color: #444;
`;

/* ---------- ribbon ---------- */
const Ribbon = styled.section`
  display: flex;
  align-items: stretch;
  height: 86px;
  padding: 6px 0 1px 6px;
  border-bottom: 1px solid ${line};
`;
const Group = styled.div`
  display: flex;
  width: ${(p) => p.$w}px;
  padding-left: 1px;
  border-left: ${(p) => (p.$first ? 0 : 1)}px solid #c6c6c6;
  ${(p) => p.$first && css`padding-left: 0;`}
`;
const BigButton = styled.button`
  display: flex;
  flex-direction: column;
  align-items: center;
  flex: none;
  width: ${(p) => p.$w}px;
  height: 78px;
  padding-top: ${(p) => (p.$menu ? 4 : 11)}px;
  border: 1px solid ${(p) => (p.$state === "hover" ? "#b0b0b0" : p.$state === "on" ? "#606060" : "transparent")};
  background: ${(p) => (p.$state === "hover" ? "#fff" : p.$state === "on" ? "#b1b1b1" : "none")};
  font-size: 13px;
  line-height: 19px;
  white-space: pre;
  ${Caret} { margin-top: 20px; }
`;
const Stack = styled.div`
  display: flex;
  flex-direction: column;
  width: ${(p) => p.$w}px;
`;
const SmallButton = styled.button`
  display: flex;
  align-items: center;
  gap: 7px;
  height: 26px;
  padding-left: 2px;
  font-size: 13px;
  white-space: nowrap;
`;

/* ---------- workspace ---------- */
const Workspace = styled.main`
  display: flex;
  flex: 1;
  min-height: 0;
`;
const Column = styled.div`
  display: flex;
  flex-direction: column;
  flex: 1;
  min-width: 0;
`;
const Viewport = styled.section`
  position: relative;
  flex: 1;
  min-height: 0;
  overflow: hidden;
`;
const Scene = styled.svg`
  position: absolute;
  inset: 0;
  width: 100%;
  height: 100%;
`;
const TabRow = styled.div`
  position: relative;
  display: flex;
  height: 29px;
`;
const Tab = styled.button`
  flex: none;
  width: ${(p) => p.$w}px;
  font-size: 14px;
  line-height: 27px;
  white-space: nowrap;
  color: #222;
  background: ${(p) => (p.$on ? face : "#d4d4d4")};
  font-weight: ${(p) => (p.$on ? 700 : 400)};
  border-bottom: 1px solid ${line};
  border-right: 1px solid ${line};
`;
const DocControls = styled.div`
  display: flex;
  align-items: center;
  margin-left: auto;
  padding: 2px 7px 0 0;
  color: #9a9a9a;
`;
const DocButton = styled.button`
  display: flex;
  justify-content: center;
  width: 26px;
`;
const ViewTools = styled.div`
  position: relative;
  display: flex;
  align-items: center;
  justify-content: center;
  height: 30px;
  padding-right: 2px;
`;
const ViewButton = styled.button`
  display: flex;
  align-items: center;
  justify-content: center;
  width: 26px;
  height: 26px;
  svg { opacity: ${(p) => (p.$on ? 1 : 0.8)}; }
  ${(p) => p.$on && css`background: #a3a3a3; border: 1px solid #606060;`}
`;
const ViewCaret = styled.button`
  display: flex;
  justify-content: center;
  width: ${(p) => p.$w || 14}px;
`;
const PanelHandle = styled.button`
  position: absolute;
  left: 0;
  top: 50%;
  width: 11px;
  height: 49px;
  margin-top: -25px;
  border: 1px solid ${line};
  border-left: 0;
  background: ${face};
  &::after {
    content: "";
    display: block;
    width: 6px;
    height: 6px;
    margin-left: 1px;
    border-radius: 50%;
    border: 1px solid #888;
    background: #ccc;
  }
`;
const TaskTabs = styled.aside`
  position: absolute;
  right: 0;
  top: 84px;
  width: 33px;
  border: 1px solid ${line};
  border-right: 0;
`;
const TaskTab = styled.button`
  display: flex;
  align-items: center;
  justify-content: center;
  width: 100%;
  height: ${(p) => (p.$on ? 29 : 30)}px;
  background: ${(p) => (p.$on ? face : "#d4d4d4")};
  border-bottom: 1px solid ${line};
  &:last-child { border-bottom: 0; }
`;
const ViewName = styled.div`
  position: absolute;
  left: 14px;
  bottom: 1px;
  font: 500 18px/22px Lato, sans-serif;
  color: #111;
`;
const BottomTabs = styled.div`
  display: flex;
  height: 21px;
  border-left: 2px solid #a9c3c8;
  border-right: 1px solid #94b0b5;
  border-bottom: 1px solid ${line};
  background: ${face};
`;
const Player = styled.div`
  display: flex;
  margin-left: 25px;
  border-top: 1px solid #111;
`;
const PlayerButton = styled.button`
  width: 20px;
  border: 1px solid #8d8fa4;
  background: #a9abc2;
  display: flex;
  align-items: center;
  justify-content: center;
`;
const SheetTab = styled.button`
  width: ${(p) => p.$w}px;
  font-size: 15px;
  line-height: 18px;
  text-align: left;
  padding-left: 14px;
  ${(p) => p.$on
    ? css`padding-left: 16px; font-weight: 700; color: #000;`
    : css`background: #d4d4d4; border: 1px solid ${line}; border-bottom: 0;`}
`;
const SheetRest = styled.div`
  flex: 1;
  border-top: 1px solid ${line};
`;

/* ---------- side tool columns ---------- */
const ToolColumn = styled.aside`
  display: flex;
  flex-direction: column;
  align-items: ${(p) => (p.$main ? "flex-start" : "center")};
  align-self: flex-start;
  flex: none;
  width: ${(p) => (p.$main ? 51 : 35)}px;
  padding: 3px 0 6px;
  border-bottom: 1px solid ${line};
  ${(p) => p.$main && css`border-left: 1px solid ${line};`}
`;
const Grip = styled.div`
  width: ${(p) => (p.$main ? "100%" : "27px")};
  height: 2px;
  margin-bottom: 9px;
  ${(p) => p.$main && css`border-left: 3px solid transparent;`}
  background: repeating-linear-gradient(90deg, #999 0 2px, transparent 2px 4px) padding-box;
`;
const ToolButton = styled.button`
  display: flex;
  align-items: center;
  gap: ${(p) => p.$gap || 0}px;
  height: 26px;
  padding-left: ${(p) => (p.$main ? 6 : 0)}px;
`;
const Abc = styled.span`
  position: relative;
  width: 20px;
  height: 20px;
  font-size: 10px;
  line-height: 10px;
  svg { position: absolute; left: 0; top: 2px; }
`;
const Rule = styled.hr`
  width: ${(p) => p.$w}px;
  height: 1px;
  margin: ${(p) => p.$m};
  border: 0;
  background: ${line};
`;

/* ---------- status bar ---------- */
const StatusBar = styled.footer`
  display: flex;
  height: 20px;
  padding: 1px 86px 0 1px;
  font-size: 14px;
  line-height: 19px;
  white-space: nowrap;
`;
const StatusText = styled.div`
  flex: 1;
`;
const StatusCell = styled.div`
  width: ${(p) => p.$w}px;
  text-align: center;
  border-left: 1px solid #d0d0d0;
`;
const UnitsButton = styled.button`
  display: flex;
  align-items: center;
  gap: 26px;
  height: 19px;
  padding-left: 38px;
  border-left: 1px solid #d0d0d0;
  ${Caret} { transform: rotate(180deg); }
`;

/* ---------- model drawing ---------- */
const smooth = (pts) =>
  pts.slice(0, -1).reduce((d, p, i) => {
    const a = pts[i - 1] || p;
    const q = pts[i + 1];
    const b = pts[i + 2] || q;
    return `${d}C${p[0] + (q[0] - a[0]) / 6} ${p[1] + (q[1] - a[1]) / 6} ${q[0] - (b[0] - p[0]) / 6} ${q[1] - (b[1] - p[1]) / 6} ${q[0]} ${q[1]}`;
  }, `M${pts[0][0]} ${pts[0][1]}`);

const baseLine = smooth([
  [889.5, 713], [893, 745], [902, 775], [915, 803], [937, 835], [963, 863], [996, 887], [1037, 904],
  [1085, 913], [1130, 916], [1180, 912], [1224, 903], [1260, 888], [1289, 867], [1311, 838], [1324, 805], [1330.5, 763],
]);
const shadowLine = smooth([
  [900, 548], [875, 541], [853, 535], [833, 524], [793, 506], [750, 494], [693, 488], [643, 492], [600, 505],
  [567, 524], [543, 546], [530, 568], [527, 584], [533, 605], [550, 627], [570, 647], [590, 664], [610, 676],
  [627, 695], [650, 717], [683, 739], [733, 766], [800, 804], [890, 858], [940, 885], [993, 905], [1060, 920],
  [1120, 924], [1170, 921], [1227, 903],
]);
const rimX = 1110.5;

const Jar = () => (
  <Scene viewBox="0 119 1834 869" preserveAspectRatio="xMidYMid slice" aria-label="Jar model">
    <defs>
      <linearGradient id="sky" x1="0" y1="119" x2="0" y2="988" gradientUnits="userSpaceOnUse">
        <stop offset="0" stopColor="#e9ebf2" />
        <stop offset=".2" stopColor="#e1e4ed" />
        <stop offset=".45" stopColor="#e0e3ed" />
        <stop offset=".56" stopColor="#e5e8ef" />
        <stop offset=".61" stopColor="#edeff3" />
        <stop offset=".66" stopColor="#f8f9fb" />
        <stop offset=".71" stopColor="#fff" />
        <stop offset=".85" stopColor="#fff" />
        <stop offset="1" stopColor="#f4f5f9" />
      </linearGradient>
      <linearGradient id="cyl" x1="-220" y1="0" x2="221" y2="0" gradientUnits="userSpaceOnUse">
        <stop offset="0" stopColor="#85797f" />
        <stop offset=".04" stopColor="#766b70" />
        <stop offset=".1" stopColor="#656063" />
        <stop offset=".18" stopColor="#656063" />
        <stop offset=".27" stopColor="#6e686c" />
        <stop offset=".31" stopColor="#776b71" />
        <stop offset=".43" stopColor="#807478" />
        <stop offset=".58" stopColor="#8b8087" />
        <stop offset=".77" stopColor="#988d94" />
        <stop offset=".9" stopColor="#9d9298" />
        <stop offset="1" stopColor="#958a90" />
      </linearGradient>
      <linearGradient id="shoulder" x1="890" y1="520" x2="1331" y2="440" gradientUnits="userSpaceOnUse">
        <stop offset="0" stopColor="#81767c" />
        <stop offset=".15" stopColor="#776c72" />
        <stop offset=".3" stopColor="#857a80" />
        <stop offset=".45" stopColor="#91868d" />
        <stop offset=".65" stopColor="#a3989f" />
        <stop offset=".82" stopColor="#b8acb3" />
        <stop offset="1" stopColor="#aca1a8" />
      </linearGradient>
      <linearGradient id="wall" x1="962" y1="0" x2="1258" y2="20" gradientUnits="userSpaceOnUse">
        <stop offset="0" stopColor="#94898f" />
        <stop offset=".2" stopColor="#9a8f96" />
        <stop offset=".55" stopColor="#897f85" />
        <stop offset=".73" stopColor="#776d72" />
        <stop offset=".85" stopColor="#656063" />
        <stop offset=".95" stopColor="#656063" />
        <stop offset="1" stopColor="#7a7076" />
      </linearGradient>
      <linearGradient id="neck" x1="937" y1="0" x2="1284" y2="0" gradientUnits="userSpaceOnUse">
        <stop offset="0" stopColor="#857a80" />
        <stop offset=".15" stopColor="#6a6467" />
        <stop offset=".35" stopColor="#7a7075" />
        <stop offset=".6" stopColor="#93888f" />
        <stop offset=".85" stopColor="#9f949b" />
        <stop offset="1" stopColor="#8d8288" />
      </linearGradient>
      <linearGradient id="bead" x1="937" y1="0" x2="1284" y2="0" gradientUnits="userSpaceOnUse">
        <stop offset="0" stopColor="#857a80" />
        <stop offset=".3" stopColor="#92878e" />
        <stop offset=".75" stopColor="#bfb3ba" />
        <stop offset="1" stopColor="#9f949b" />
      </linearGradient>
      <linearGradient id="base" x1="900" y1="860" x2="1320" y2="780" gradientUnits="userSpaceOnUse">
        <stop offset="0" stopColor="#656063" />
        <stop offset=".4" stopColor="#6a6366" />
        <stop offset=".6" stopColor="#7a6f74" />
        <stop offset=".85" stopColor="#94898f" />
        <stop offset="1" stopColor="#9a8f96" />
      </linearGradient>
      <linearGradient id="shade" x1="560" y1="500" x2="860" y2="860" gradientUnits="userSpaceOnUse">
        <stop offset="0" stopColor="#929498" />
        <stop offset=".4" stopColor="#85878a" />
        <stop offset="1" stopColor="#757575" />
      </linearGradient>
      <radialGradient id="mirror" cx="1130" cy="890" r="250" gradientUnits="userSpaceOnUse">
        <stop offset="0" stopColor="#b0aeaf" />
        <stop offset=".5" stopColor="#b9b6b8" />
        <stop offset="1" stopColor="#d3d0d4" />
      </radialGradient>
      <radialGradient id="shine">
        <stop offset="0" stopColor="#c9bdc4" />
        <stop offset=".4" stopColor="#bfb3ba" stopOpacity=".7" />
        <stop offset="1" stopColor="#b5a9b0" stopOpacity="0" />
      </radialGradient>
      <filter id="haze" x="-40%" y="-40%" width="180%" height="180%"><feGaussianBlur stdDeviation="60" /></filter>
      <filter id="soft" x="-50%" y="-50%" width="200%" height="200%"><feGaussianBlur stdDeviation="20" /></filter>
      <filter id="soft8" x="-50%" y="-50%" width="200%" height="200%"><feGaussianBlur stdDeviation="8" /></filter>
      <filter id="edge" x="-5%" y="-5%" width="110%" height="110%"><feGaussianBlur stdDeviation="1.500" /></filter>
      <clipPath id="topClip">
        <path d="M889.500 483C892 440 905 405 936 368C975 335 1030 322 1110 318C1200 322 1250 365 1257 374C1297 420 1330 480 1330.500 530.500A220.500 124.800 6 0 1 1157 633C1010 630 893 570 889.500 483Z" />
      </clipPath>
      <clipPath id="capClip">
        <path d="M-220.500 0A220.500 124.800 0 0 0 220.500 0V-260H-220.500Z" transform="matrix(1 .107 0 1 1110 507)" />
      </clipPath>
      <clipPath id="outlineClip">
        <path d="M889.500 700V483C892 440 905 405 936 368C975 335 1030 322 1110 318C1200 322 1250 365 1257 374C1297 420 1330 480 1330.500 530V700Z" />
      </clipPath>
      <clipPath id="baseClip"><path d={`${baseLine}L1110 730Z`} /></clipPath>
      <clipPath id="mouth"><ellipse cx={rimX} cy="344" rx="148" ry="85.500" /></clipPath>
      <clipPath id="shadeClip"><path d={`${shadowLine}L1200 700H900Z`} /></clipPath>
    </defs>

    <rect x="-200" y="0" width="2300" height="1200" fill="url(#sky)" />
    <ellipse cx="1540" cy="480" rx="230" ry="90" fill="#d6dae7" opacity=".7" filter="url(#haze)" />
    <ellipse cx="1850" cy="150" rx="240" ry="140" fill="#f4f5f8" opacity=".6" filter="url(#haze)" />
    <path d="M-300 -200H1360L1290 100C1180 260 1020 345 850 395C650 450 350 505 -300 518Z" fill="#fff" filter="url(#haze)" />

    <path d="M889 875C890 850 900 825 915 803L1100 780L1305 848C1322 880 1330 900 1330 930V1000H889Z" fill="url(#mirror)" />
    <path d={`${shadowLine}L1200 700H900Z`} fill="url(#shade)" filter="url(#edge)" />
    <path clipPath="url(#shadeClip)" d="M889 880C890 850 900 825 915 803L1200 780V940H889Z" fill="#505050" filter="url(#edge)" />

    <path d={`M890 600V713${baseLine.replace("M", "L")}V600Z`} fill="url(#base)" />
    <g clipPath="url(#baseClip)">
      <path d="M1120 925C1220 915 1280 880 1320 810L1350 940Z" fill="#655e62" filter="url(#soft8)" />
    </g>
    <path d="M-220.500 -230V0A220.500 125 0 0 0 220.500 0V-230Z" transform="matrix(1 .107 0 1 1110 737)" fill="url(#cyl)" />

    <g clipPath="url(#outlineClip)">
      <g clipPath="url(#capClip)">
        <rect x="880" y="300" width="470" height="350" fill="url(#shoulder)" />
        <path d="M900 520C940 580 1000 620 1100 645L1060 665L900 640Z" fill="#656063" filter="url(#soft)" />
        <ellipse cx="945" cy="545" rx="28" ry="60" fill="#656063" filter="url(#soft)" transform="rotate(-30 945 545)" />
        <ellipse cx="1010" cy="480" rx="62" ry="15" fill="#5f595c" filter="url(#soft8)" transform="rotate(22 1010 480)" />
        <ellipse cx="1195" cy="610" rx="120" ry="40" fill="#948990" opacity=".8" filter="url(#soft)" transform="rotate(-14 1195 610)" />
        <path d="M1345 500C1330 590 1260 640 1157 650L1360 670Z" fill="#958a90" filter="url(#soft8)" />
        <ellipse cx="1212" cy="541" rx="75" ry="42" fill="url(#shine)" />
      </g>
    </g>

    <path d="M947 325C936 345 934 370 940 383C935 395 935 415 942 428C965 475 1035 499 1110 499C1195 499 1265 465 1281 410C1284 400 1280 390 1281 385C1288 360 1284 345 1274 325Z" fill="url(#neck)" />
    <path d="M942 420C965 470 1040 493 1110 493C1190 493 1260 465 1279 410" fill="none" stroke="url(#bead)" strokeWidth="8" />
    <path d="M990 440C1060 474 1170 474 1238 431" fill="none" stroke="url(#bead)" strokeWidth="9" />
    <g fill="none" stroke="#0c0c0c">
      <path d="M937 386C934 395 936 412 940 423C960 470 1030 498 1110 498C1195 498 1262 465 1279 420C1283 405 1283 395 1282 388" />
      <path d="M940 380C938 440 1020 487.500 1110 487.500C1205 487.500 1284 440 1281 384" />
      <path d="M944 382C945 440 1025 482.500 1110 482.500C1200 482.500 1277 440 1276 392" />
      <path d="M946 328C932 350 935 375 941 383C946 392 952 398 958 402" />
      <path d="M949 340C940 352 942 372 958 396M944 345C937 360 943 380 956 392M943 383C950 380 955 390 958 402" />
      <path d="M1275 330C1287 350 1286 375 1276 390C1268 404 1258 415 1247 424" />
      <path d="M1277 345C1280 370 1270 392 1248 418M1273 350C1276 372 1262 400 1247 421M1281 390C1277 410 1262 422 1247 424" />
      <path d="M961 412C1000 440 1055 452.500 1110 452.500C1165 452.500 1215 440 1243 416" />
      <path d="M961 412C965 432 985 443 990 437M993 430L988 442M990 437C1030 452 1070 458 1110 458C1155 458 1200 447 1230 426" />
      <path d="M988 441C1030 457 1070 461.500 1110 461.500C1155 461.500 1200 451 1232 432M1226 422L1233 436M1243 416C1244 422 1238 432 1232 434" />
      <path d="M985 441C1030 465 1070 470 1110 470C1160 470 1200 460 1232 436" strokeWidth="1.800" />
    </g>

    <ellipse cx={rimX} cy="343.500" rx="164" ry="96.500" fill="#bdb1b8" stroke="#0c0c0c" strokeWidth="1.400" />
    <ellipse cx={rimX} cy="343.500" rx="161" ry="94" fill="none" stroke="#0c0c0c" strokeWidth=".6" />
    <ellipse cx={rimX} cy="343.500" rx="152.500" ry="90" fill="#a3989f" stroke="#0c0c0c" />
    <ellipse cx={rimX} cy="344" rx="148" ry="85.500" fill="url(#wall)" />
    <g clipPath="url(#mouth)">
      <path d="M960 398C985 350 1050 332 1108 332C1170 332 1215 355 1250 392V440H960Z" fill="#656063" />
      <path d="M955 375C1020 355 1105 352 1110 385C1112 400 1095 420 1080 440H955Z" fill="#8a7f85" filter="url(#soft8)" />
      <path d="M997 398C1060 382 1130 388 1193 413L1150 440H1085C1090 420 1105 400 1112 390Z" fill="#656063" opacity=".6" />
      <path d="M960 398C985 350 1050 332 1108 332C1170 332 1215 355 1250 392M1011 353C1035 342 1055 339 1075 338M985 402C1050 382 1130 388 1195 414" fill="none" stroke="#0c0c0c" />
    </g>
    <ellipse cx={rimX} cy="344" rx="148" ry="85.500" fill="none" stroke="#0c0c0c" strokeWidth="1.200" />

    <g fill="none" stroke="#0c0c0c">
      <path d="M889.500 492V713M1330.500 620V763" />
      <path d={baseLine} />
      <path d="M-220.500 0A220.500 125 0 0 0 220.500 0" transform="matrix(1 .107 0 1 1110 735)" />
      <path d="M-219 0A219 127 0 0 0 219 0" transform="matrix(1 .107 0 1 1110 738)" strokeWidth="1.600" />
    </g>
    <g fill="none" stroke="#ff8000" strokeWidth="1.500">
      <ellipse rx="220.500" ry="124.800" transform="matrix(1 .107 0 1 1110 507)" />
      <ellipse cx="1110" cy="409.500" rx="161.500" ry="93.500" />
      <path d="M1073 322C1045 324 1010 332 993 336C965 346 948 358 936 368C910 395 892 440 890 480" />
      <path d="M1257 374C1295 415 1328 470 1330.500 528" />
    </g>
  </Scene>
);

const TriadSvg = styled.svg`
  position: absolute;
  left: 8px;
  bottom: 40px;
  font: 13px ${sans};
`;
const Triad = () => (
  <TriadSvg width="80" height="76" viewBox="8 874 80 76">
    <path d="M48 920L31 929" stroke="#1b1bb8" strokeWidth="5" />
    <path d="M21 936L28 925L34 935Z" fill="#2a2ad8" />
    <path d="M48 920L65 929" stroke="#b81b1b" strokeWidth="5" />
    <path d="M76 936L68 925L62 935Z" fill="#e02a2a" />
    <path d="M48 921V900" stroke="#166a16" strokeWidth="5" />
    <path d="M48 888L54 899L48 902L42 899Z" fill="#2a9a2a" />
    <text x="44" y="888" fill="#0a8a0a">Y</text>
    <text x="73" y="942" fill="#e01010">X</text>
    <text x="13" y="942" fill="#1010e0">Z</text>
  </TriadSvg>
);

/* ---------- data ---------- */
const menus = ["File", "Edit", "View", "Insert", "Tools", "Window", "Help"];
const tabs = [
  ["Features", 80], ["Sketch", 62], ["Surfaces", 75], ["Direct Editing", 109], ["Evaluate", 74],
  ["DimXpert", 82], ["SOLIDWORKS Add-Ins", 173], ["Power Surfacing", 129], ["Power Surfacing RE", 151],
  ["CAM", 56], ["Analysis Preparation", 158],
];
const viewTools = [
  ["zoomFit"], ["zoomArea"], ["previous"], ["section"], ["orient", 14], ["normal"], ["viewCube"],
  ["isoCube", 0, true], ["display", 14], ["eye", 14], ["appearance"], ["sceneBall", 14], ["monitor", 14],
];
const taskTabs = ["home", "books", "folder", "palette", "ball", "props", "stamp", "sync"];
const sketchTools = ["skTangent", "skCircle", "skArc", "skSpline", "skCorner"];
const sketchTools2 = ["skTan2", "skInflect", "skPeak", "skFit"];
const evalTools = ["tape", "balance", "sheetArrow", "gauge", "perf", "boxTick", "boxCheck", "sigma", "deviate", "symmetry", "thick", "compare"];
const simTools = ["simZoom", "flow", "circleCheck", "squares", "compass"];

const Big = ({ icon, label, w, menu, state }) => (
  <BigButton $w={w} $menu={menu} $state={state}>
    <Icon name={icon} size={20} />
    {label}
    {menu && <Caret />}
  </BigButton>
);
const Small = ({ icon, label }) => (
  <SmallButton><Icon name={icon} size={19} />{label}</SmallButton>
);
const Quick = ({ icon, w, caret, caretColor }) => (
  <>
    <QuickButton $w={w} aria-label={icon}><Icon name={icon} /></QuickButton>
    {caret && <QuickButton $w={caret} aria-label={`${icon} options`}><Caret $color={caretColor} /></QuickButton>}
  </>
);

export default function App() {
  return (
    <Page>
      <GlobalStyle />
      <TitleBar>
        <Logo>
          <svg width="30" height="32" viewBox="0 0 30 32" fill="none" stroke="#dc2a1f" strokeWidth="2" aria-hidden="true">
            <path d="M12 5C15 1 20 2 19 6C18 9 14 12 9 14" />
            <path d="M4 14.500C11 13 15 16 12 21C10 25 6 27 2 28C5 25 8 20 10 15.500" />
            <path d="M28 12.500C23 11 19 12 19 15C19 18 26 19 25 23C24 26 19 26 15 25.500" strokeWidth="3" />
          </svg>
          <LogoText><b>SOLID</b>WORKS</LogoText>
        </Logo>
        <Menu>{menus.map((m) => <MenuItem key={m}>{m}</MenuItem>)}</Menu>
        <PinButton aria-label="Pin menu"><Icon name="pin" size={14} /></PinButton>
        <QuickTools>
          <Quick icon="home" w={24} />
          <Quick icon="doc" w={26} caret={13} />
          <Quick icon="open" w={26} caret={13} />
          <Quick icon="save" w={26} caret={13} />
          <Quick icon="print" w={26} caret={13} />
          <Quick icon="undo" w={26} caret={14} caretColor="#999" />
          <QuickButton $w={26} $on aria-label="Select"><Icon name="cursor" /></QuickButton>
          <QuickButton $w={12} $boxed aria-label="Select options"><Caret /></QuickButton>
          <Quick icon="traffic" w={27} />
          <Quick icon="list" w={25} />
          <Quick icon="gear" w={26} caret={13} />
        </QuickTools>
        <DocTitle>370 rami oval jar.SLDPRT</DocTitle>
        <Search onSubmit={(e) => e.preventDefault()}>
          <Icon name="terminal" />
          <SearchInput aria-label="Search Commands" placeholder="Search Commands" />
          <SearchButton aria-label="Search"><Icon name="lens" size={25} /><Caret /></SearchButton>
        </Search>
        <WindowTools>
          <Quick icon="person" w={26} />
          <Quick icon="help" w={26} caret={12} />
          <Quick icon="min" w={30} />
          <Quick icon="restore" w={22} />
          <Quick icon="close" w={27} />
        </WindowTools>
      </TitleBar>

      <Ribbon>
        <Group $w={305} $first>
          <Big icon="extrude" label={"Extruded\nBoss/Base"} w={71} state="hover" />
          <Big icon="revolve" label={"Revolved\nBoss/Base"} w={71} />
          <Stack $w={150}>
            <Small icon="sweep" label="Swept Boss/Base" />
            <Small icon="loft" label="Lofted Boss/Base" />
            <Small icon="boundary" label="Boundary Boss/Base" />
          </Stack>
        </Group>
        <Group $w={339}>
          <Big icon="extrudeCut" label={"Extruded\nCut"} w={64} />
          <Big icon="hole" label="Hole Wizard" w={84} menu />
          <Big icon="revolveCut" label={"Revolved\nCut"} w={65} />
          <Stack $w={118}>
            <Small icon="sweepCut" label="Swept Cut" />
            <Small icon="loftCut" label="Lofted Cut" />
            <Small icon="boundaryCut" label="Boundary Cut" />
          </Stack>
        </Group>
        <Group $w={297}>
          <Big icon="fillet" label="Fillet" w={38} menu />
          <Big icon="pattern" label="Linear Pattern" w={96} menu />
          <Stack $w={69}>
            <Small icon="rib" label="Rib" />
            <Small icon="draft" label="Draft" />
            <Small icon="shell" label="Shell" />
          </Stack>
          <Stack $w={88}>
            <Small icon="wrap" label="Wrap" />
            <Small icon="intersect" label="Intersect" />
            <Small icon="mirror" label="Mirror" />
          </Stack>
        </Group>
        <Group $w={126}>
          <Big icon="reference" label="Referenc..." w={72} menu />
          <Big icon="curves" label="Curves" w={50} menu />
        </Group>
        <Group $w={74}>
          <Big icon="instant" label="Instant3D" w={71} state="on" />
        </Group>
        <Group $w={60}>
          <Big icon="scale" label="Scale" w={40} />
        </Group>
      </Ribbon>

      <Workspace>
        <Column>
          <Viewport>
            <Jar />
            <TabRow>
              {tabs.map(([name, w], i) => <Tab key={name} $w={w} $on={i === 0}>{name}</Tab>)}
              <DocControls>
                {["winLeft", "winRight", "min", "restore", "close"].map((n) => (
                  <DocButton key={n} aria-label={n}><Icon name={n} /></DocButton>
                ))}
              </DocControls>
            </TabRow>
            <ViewTools>
              {viewTools.map(([name, caret, on]) => (
                <React.Fragment key={name}>
                  <ViewButton $on={on} aria-label={name}><Icon name={name} size={19} /></ViewButton>
                  {caret ? <ViewCaret $w={caret} aria-label={`${name} options`}><Caret $color="#999" /></ViewCaret> : null}
                </React.Fragment>
              ))}
            </ViewTools>
            <PanelHandle aria-label="Show feature tree" />
            <TaskTabs>
              {taskTabs.map((n, i) => <TaskTab key={n} $on={i === 0} aria-label={n}><Icon name={n} /></TaskTab>)}
            </TaskTabs>
            <Triad />
            <ViewName>*Isometric</ViewName>
          </Viewport>
          <BottomTabs>
            <Player>
              {["M5 2V12M12 2L6.500 7L12 12Z", "M10 2L4 7L10 12Z", "M4 2L10 7L4 12Z", "M9 2V12M2 2L7.500 7L2 12Z"].map((d) => (
                <PlayerButton key={d} aria-label="Scroll tabs">
                  <svg width="14" height="14" viewBox="0 0 14 14"><path d={d} fill="#7d8099" stroke="#7d8099" /></svg>
                </PlayerButton>
              ))}
            </Player>
            <SheetTab $w={76} $on>Model</SheetTab>
            <SheetTab $w={145}>Motion Study 1</SheetTab>
            <SheetRest />
          </BottomTabs>
        </Column>

        <ToolColumn>
          <Grip />
          {sketchTools.map((n) => <ToolButton key={n} aria-label={n}><Icon name={n} size={19} /></ToolButton>)}
          <Rule $w={25} $m="2px 0 5px" />
          {sketchTools2.map((n) => <ToolButton key={n} aria-label={n}><Icon name={n} size={19} /></ToolButton>)}
        </ToolColumn>
        <ToolColumn $main>
          <Grip $main />
          <ToolButton $main aria-label="Check spelling"><Abc>Abc<Icon name="tick" /></Abc></ToolButton>
          {evalTools.map((n) => <ToolButton key={n} $main aria-label={n}><Icon name={n} /></ToolButton>)}
          <ToolButton $main $gap={12} aria-label="Check options"><Icon name="checkGroup" /><Caret /></ToolButton>
          <ToolButton $main aria-label="excel"><Icon name="excel" /></ToolButton>
          <Rule $w={45} $m="2px 0 7px 5px" />
          <Rule $w={45} $m="0 0 5px 5px" />
          {simTools.map((n) => <ToolButton key={n} $main aria-label={n}><Icon name={n} /></ToolButton>)}
        </ToolColumn>
      </Workspace>

      <StatusBar>
        <StatusText>SOLIDWORKS Premium 2018 SP4.0</StatusText>
        <StatusCell $w={8} />
        <StatusCell $w={87}>Editing Part</StatusCell>
        <StatusCell $w={16} />
        <UnitsButton>MMGS <Caret /></UnitsButton>
      </StatusBar>
    </Page>
  );
}
